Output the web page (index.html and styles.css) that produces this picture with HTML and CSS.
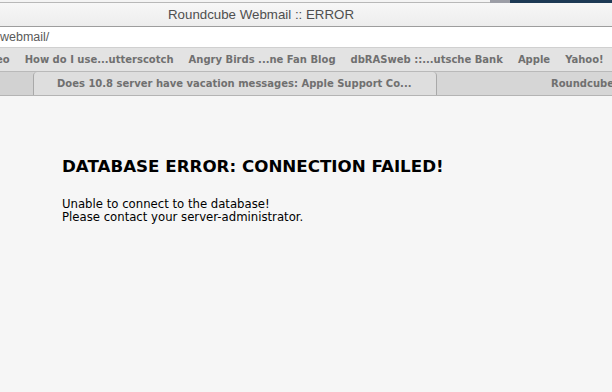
FILE: index.html
```html
<!DOCTYPE html>
<html lang="en">
<head>
  <meta charset="UTF-8">
  <title>Roundcube Webmail :: ERROR</title>
  <link rel="stylesheet" href="styles.css">
</head>
<body>
  <div class="browser">
    <div class="desk">
      <span class="desk-window"></span>
      <span class="desk-grey"></span>
      <span class="desk-blue"></span>
    </div>
    <div class="titlebar">Roundcube Webmail :: ERROR</div>
    <div class="addressbar">webmail/</div>
    <div class="bookmarks">
      <span class="bookmark-cut">eo</span>
      <span>How do I use...utterscotch</span>
      <span>Angry Birds ...ne Fan Blog</span>
      <span>dbRASweb ::...utsche Bank</span>
      <span>Apple</span>
      <span>Yahoo!</span>
    </div>
    <div class="tabs">
      <div class="tab tab-stub"></div>
      <div class="tab tab-active">Does 10.8 server have vacation messages: Apple Support Co...</div>
      <div class="tab tab-last">Roundcube</div>
    </div>
  </div>
  <div class="error-box">
    <h3>DATABASE ERROR: CONNECTION FAILED!</h3>
    <p>Unable to connect to the database!<br>
    Please contact your server-administrator.</p>
  </div>
</body>
</html>
```

FILE: styles.css
```css
body {
  margin: 0;
  padding: 0;
  background: #f6f6f6;
  font-family: "DejaVu Sans", "Liberation Sans", sans-serif;
}
.browser {
  display: flex;
  flex-direction: column;
}
.desk {
  display: flex;
  height: 3px;
}
.desk-window {
  flex: 1;
  background: #f4f4f4;
  border-bottom: 1px solid #b8b8b8;
}
.desk-grey {
  width: 20px;
  background: #9c9ea6;
}
.desk-blue {
  width: 102px;
  background: #1d3a55;
}
.titlebar {
  height: 23px;
  line-height: 23px;
  padding-left: 168px;
  font-family: "Liberation Sans", Arial, sans-serif;
  font-size: 13.3px;
  color: #4f4f4f;
  background: linear-gradient(#f7f7f7, #ededed);
  border-bottom: 1px solid #9d9d9d;
}
.addressbar {
  height: 20px;
  line-height: 20px;
  font-family: "Liberation Sans", Arial, sans-serif;
  font-size: 12.5px;
  color: #5a5a5a;
  background: #fff;
  border-bottom: 1px solid #d0d0d0;
}
.bookmarks {
  display: flex;
  gap: 15px;
  height: 23px;
  line-height: 23px;
  font-size: 10px;
  font-weight: bold;
  color: #707070;
  background: #e3e3e3;
  border-bottom: 1px solid #b9b9b9;
  overflow: hidden;
}
.bookmarks span {
  white-space: nowrap;
}
.bookmark-cut {
  margin-left: -4px;
}
.tabs {
  display: flex;
  height: 23px;
  background: #d6d6d6;
  border-bottom: 1px solid #b4b4b4;
  font-size: 10px;
  font-weight: bold;
  color: #707070;
}
.tab {
  line-height: 23px;
  white-space: nowrap;
}
.tab-stub {
  width: 33px;
  background: #d2d2d2;
}
.tab-active {
  width: 379px;
  padding-left: 23px;
  background: #dedede;
  border-left: 1px solid #a9a9a9;
  border-right: 1px solid #a9a9a9;
  border-radius: 4px 4px 0 0;
  overflow: hidden;
}
.tab-last {
  flex: 1;
  padding-left: 114px;
  overflow: hidden;
}
.error-box {
  padding: 60px 62px;
}
.error-box h3 {
  margin: 0 0 22px 0;
  font-size: 16.7px;
  font-weight: bold;
  color: #000;
}
.error-box p {
  margin: 0;
  font-size: 11.7px;
  line-height: 13px;
  color: #000;
}
```
